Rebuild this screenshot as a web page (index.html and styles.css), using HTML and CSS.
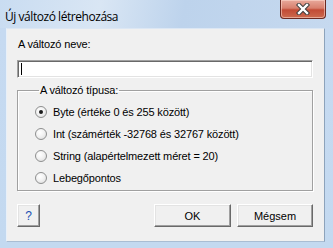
FILE: index.html
```html
<!DOCTYPE html>
<html lang="hu">
<head>
  <meta charset="UTF-8">
  <title>Új változó létrehozása</title>
  <link rel="stylesheet" href="styles.css">
</head>
<body>
  <div class="window">
    <div class="titlebar">
      <span class="title">Új változó létrehozása</span>
      <button class="close-btn" type="button">
        <svg width="14" height="12" viewBox="0 0 14 12">
          <path d="M3 2 L11 10 M11 2 L3 10" stroke="#3c3c3c" stroke-width="4.4" stroke-linecap="square"/>
          <path d="M3 2 L11 10 M11 2 L3 10" stroke="#fff" stroke-width="2.4" stroke-linecap="square"/>
        </svg>
      </button>
    </div>
    <main class="client">
      <label class="name-label" for="varName">A változó neve:</label>
      <div class="name-input"><input type="text" id="varName"><span class="caret"></span></div>
      <fieldset class="type-group">
        <legend>A változó típusa:</legend>
        <div class="radio-row"><span class="radio checked"></span>Byte (értéke 0 és 255 között)</div>
        <div class="radio-row"><span class="radio"></span>Int (számérték -32768 és 32767 között)</div>
        <div class="radio-row"><span class="radio"></span>String (alapértelmezett méret = 20)</div>
        <div class="radio-row"><span class="radio"></span>Lebegőpontos</div>
      </fieldset>
      <div class="button-row">
        <button class="btn btn-help" type="button">?</button>
        <div class="spacer"></div>
        <button class="btn btn-ok" type="button">OK</button>
        <button class="btn btn-cancel" type="button">Mégsem</button>
      </div>
    </main>
  </div>
</body>
</html>
```

FILE: styles.css
```css
body { margin: 0; width: 333px; height: 248px; overflow: hidden; font-family: 'Liberation Sans', Arial, sans-serif; font-size: 11px; letter-spacing: -0.15px; color: #000; }
.window { width: 333px; height: 248px; background: linear-gradient(180deg, #bcd4ee 0%, #c6daf1 12%, #c3d9f0 100%); display: flex; flex-direction: column; }
.titlebar { height: 28px; display: flex; align-items: flex-start; position: relative; background: linear-gradient(100deg, #c9dcf1 0%, #d9e6f4 30%, #bdd3ec 55%, #c6d9ef 100%); }
.title { font-family: 'Open Sans', 'Noto Sans', sans-serif; font-size: 12px; line-height: 16px; margin: 9px 0 0 5px; color: #000; letter-spacing: -0.45px; }
.close-btn { position: absolute; left: 280px; top: 0; width: 46px; height: 19px; padding: 0; border: 1px solid #6b2a22; border-top: none; border-radius: 0 0 4px 4px; background: linear-gradient(180deg, #e8a99b 0%, #d8806e 45%, #c24b35 55%, #cc6a4e 100%); box-shadow: inset 0 0 0 1px rgba(255, 220, 210, 0.55); display: flex; align-items: center; justify-content: center; }
.client { margin-left: 6px; width: 319px; height: 214px; background: #f0f0f0; border: 1px solid #8da3bb; border-bottom-color: #a9bdd3; border-left-color: #e8f0f9; border-top-color: #dce7f4; padding: 0 11px 0 10px; box-sizing: border-box; display: flex; flex-direction: column; }
.name-label { display: block; margin-top: 9px; line-height: 13px; padding-left: 1px; }
.name-input { margin-top: 9px; height: 18px; position: relative; background: #fff; border: 1px solid; border-color: #a0a0a0 #fff #fff #a0a0a0; box-sizing: border-box; box-shadow: inset 1px 1px 0 #696969, inset -1px -1px 0 #e3e3e3; }
.name-input input { border: none; outline: none; background: transparent; width: 100%; height: 100%; padding: 0 3px; box-sizing: border-box; font: inherit; }
.caret { position: absolute; left: 3px; top: 2px; width: 1px; height: 12px; background: #000; }
.type-group { margin: 6px 0 0; padding: 8px 0 0 17px; height: 107px; box-sizing: border-box; border: 1px solid #a0a0a0; box-shadow: 1px 1px 0 #fff, inset 1px 1px 0 #fff; }
.type-group legend { padding: 0 1px; margin-left: 4px; line-height: 13px; }
.radio-row { display: flex; align-items: center; height: 13px; margin-bottom: 9px; white-space: nowrap; }
.radio { width: 12px; height: 12px; border-radius: 50%; border: 1px solid #8e8f8f; background: radial-gradient(circle at 40% 35%, #ffffff 0%, #f2f2f2 45%, #d8d8d8 100%); margin-right: 6px; position: relative; flex: none; box-sizing: border-box; }
.radio.checked::after { content: ''; position: absolute; left: 3px; top: 3px; width: 4px; height: 4px; border-radius: 50%; background: #1b1b1b; }
.button-row { display: flex; margin-top: 13px; }
.spacer { flex: 1; }
.btn { height: 23px; padding: 0; font: inherit; background: #f0f0f0; border: 1px solid; border-color: #fff #696969 #696969 #fff; box-shadow: inset -1px -1px 0 #a0a0a0, inset 1px 1px 0 #e3e3e3; color: #000; }
.btn-help { width: 23px; color: #1a4fb3; font-size: 12px; }
.btn-ok { width: 77px; margin-right: 6px; }
.btn-cancel { width: 76px; }
```
